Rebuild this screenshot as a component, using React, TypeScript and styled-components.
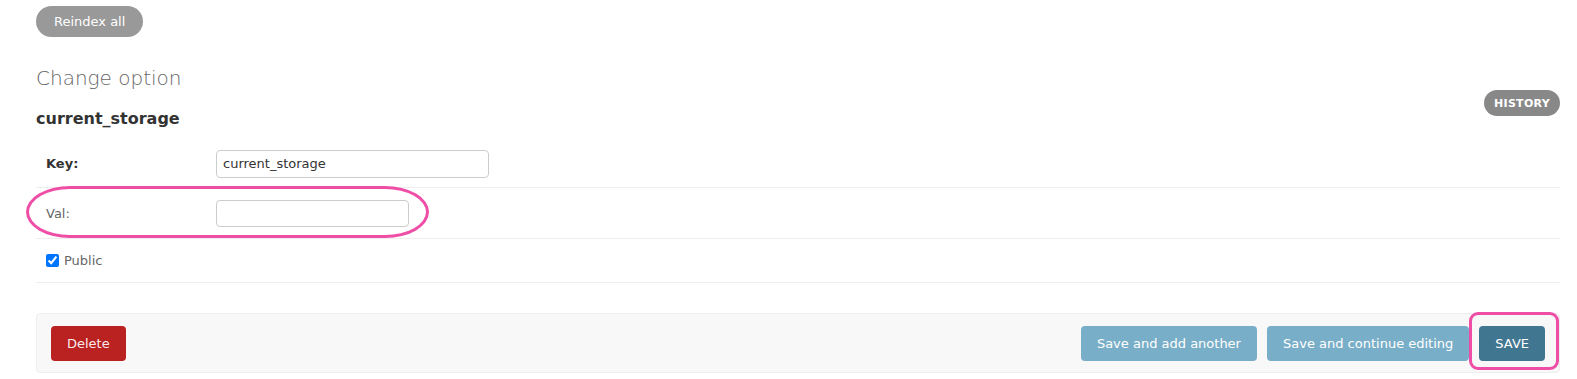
import React from 'react';
import styled, { createGlobalStyle } from 'styled-components';

const GlobalStyle = createGlobalStyle`
    body {
        margin: 0;
        background: #fff;
        color: #333;
        font-family: "DejaVu Sans", Verdana, sans-serif;
        font-size: 13px;
    }
`;

const Page = styled.div`
    padding: 6px 17px 0 36px;
`;

const PillButton = styled.button<{ small?: boolean }>`
    display: inline-flex;
    align-items: center;
    border: 0;
    border-radius: 16px;
    background: ${(props) => (props.small ? '#888' : '#999')};
    color: #fff;
    font-family: inherit;
    font-size: ${(props) => (props.small ? '11px' : '13px')};
    font-weight: ${(props) => (props.small ? 'bold' : 'normal')};
    height: ${(props) => (props.small ? '26px' : '31px')};
    padding: ${(props) => (props.small ? '0 10px' : '0 18px')};
    text-transform: ${(props) => (props.small ? 'uppercase' : 'none')};
    letter-spacing: ${(props) => (props.small ? '0.3px' : '0')};
`;

const Title = styled.h1`
    margin: 29px 0 0;
    font-size: 20px;
    line-height: 24px;
    font-weight: 300;
    color: #666;
`;

const HeadingRow = styled.div`
    display: flex;
    justify-content: space-between;
    align-items: flex-end;
`;

const ObjectName = styled.h2`
    margin: 0;
    font-size: 16px;
    line-height: 20px;
    font-weight: bold;
    color: #333;
`;

const HistoryWrap = styled.div`
    margin-bottom: 13px;
`;

const Fieldset = styled.div`
    margin-top: 11px;
`;

const FormRow = styled.div<{ h: number }>`
    position: relative;
    display: flex;
    align-items: center;
    height: ${(props) => props.h}px;
    padding: 0 10px;
    border-bottom: 1px solid #eee;
`;

const Label = styled.label<{ required?: boolean }>`
    width: 170px;
    flex-shrink: 0;
    color: ${(props) => (props.required ? '#333' : '#666')};
    font-weight: ${(props) => (props.required ? 'bold' : 'normal')};
`;

const TextInput = styled.input<{ w: number; h: number }>`
    box-sizing: border-box;
    width: ${(props) => props.w}px;
    height: ${(props) => props.h}px;
    border: 1px solid #ccc;
    border-radius: 4px;
    padding: 2px 6px;
    font-family: inherit;
    font-size: 13px;
    color: #333;
    background: #fff;
    outline: none;
`;

const CheckLabel = styled.label`
    display: flex;
    align-items: center;
    gap: 5px;
    color: #666;
`;

const Checkbox = styled.input`
    margin: 0;
    width: 13px;
    height: 13px;
    accent-color: #0075ff;
`;

const SubmitRow = styled.div`
    display: flex;
    align-items: center;
    gap: 10px;
    margin-top: 30px;
    padding: 12px 14px 11px 14px;
    background: #f8f8f8;
    border: 1px solid #eee;
    border-radius: 4px;
`;

const Spacer = styled.div`
    flex: 1;
`;

const ActionButton = styled.button<{ tone: 'delete' | 'light' | 'default' }>`
    height: 35px;
    padding: 0 16px;
    border: 0;
    border-radius: 4px;
    font-family: inherit;
    font-size: 13px;
    color: ${(props) => (props.tone === 'delete' ? '#fbe9e9' : '#fff')};
    background: ${(props) =>
        props.tone === 'delete' ? '#ba2121' : props.tone === 'light' ? '#79aec8' : '#417690'};
`;

const Highlight = styled.span`
    position: relative;
    display: inline-flex;
`;

const Ellipse = styled.div`
    position: absolute;
    left: -10px;
    top: -2px;
    width: 403px;
    height: 52px;
    box-sizing: border-box;
    border: 3px solid #ef4ea6;
    border-radius: 44px / 26px;
    pointer-events: none;
`;

const Frame = styled.div`
    position: absolute;
    left: -10px;
    right: -14px;
    top: -14px;
    bottom: -9px;
    border: 3px solid #ef4ea6;
    border-radius: 9px;
    pointer-events: none;
`;

const App: React.FC = () => (
    <>
        <GlobalStyle />
        <Page>
            <PillButton>Reindex all</PillButton>
            <Title>Change option</Title>
            <HeadingRow>
                <ObjectName>current_storage</ObjectName>
                <HistoryWrap>
                    <PillButton small>History</PillButton>
                </HistoryWrap>
            </HeadingRow>
            <Fieldset>
                <FormRow h={47}>
                    <Label required>Key:</Label>
                    <TextInput w={273} h={28} defaultValue="current_storage" />
                </FormRow>
                <FormRow h={50}>
                    <Ellipse />
                    <Label>Val:</Label>
                    <TextInput w={193} h={27} defaultValue="" />
                </FormRow>
                <FormRow h={43}>
                    <CheckLabel>
                        <Checkbox type="checkbox" defaultChecked />
                        Public
                    </CheckLabel>
                </FormRow>
            </Fieldset>
            <SubmitRow>
                <ActionButton tone="delete">Delete</ActionButton>
                <Spacer />
                <ActionButton tone="light">Save and add another</ActionButton>
                <ActionButton tone="light">Save and continue editing</ActionButton>
                <Highlight>
                    <Frame />
                    <ActionButton tone="default">SAVE</ActionButton>
                </Highlight>
            </SubmitRow>
        </Page>
    </>
);

export default App;
